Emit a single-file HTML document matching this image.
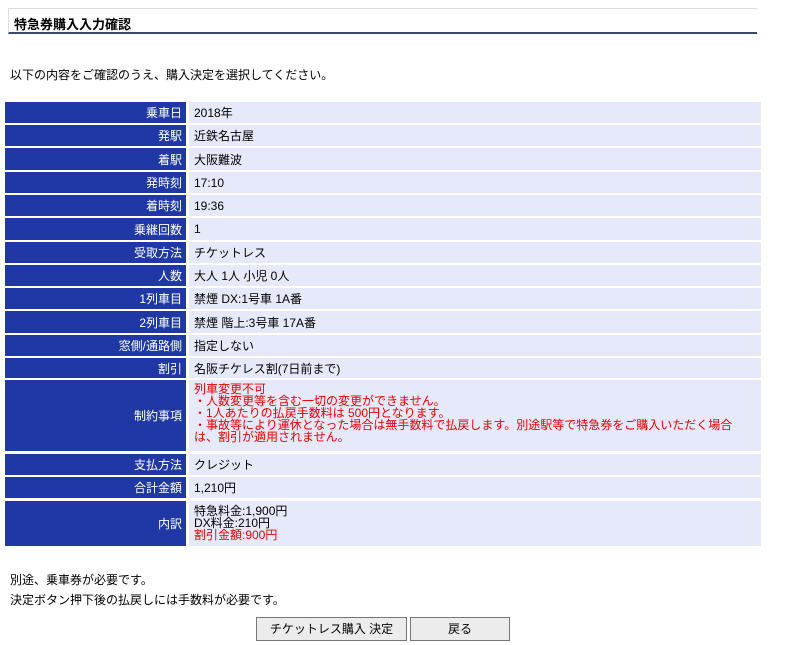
<!DOCTYPE html>
<html><head><meta charset="utf-8"><style>
body{margin:0;background:#fff;font-family:"Liberation Sans","Noto Sans CJK JP",sans-serif;font-size:12px;color:#000;width:789px;height:645px;overflow:hidden;position:relative}
.title{position:absolute;left:8px;top:8px;width:749px;height:26px;border-top:1px solid #ddd;border-left:1px solid #ddd;border-bottom:2px solid #3a4a6a;box-sizing:border-box;font-weight:bold;font-size:13px;padding:5px 0 0 5px}
.t{position:absolute;left:10px}
.r{position:absolute;left:5px;width:756px;display:flex}
.l{width:181px;background:#1f38a6;color:#fff;text-align:right;padding-right:4px;box-sizing:border-box;display:flex;align-items:center;justify-content:flex-end}
.v{margin-left:3px;flex:1;background:#e6e9fa;padding-left:5px;display:flex;align-items:center}
.red{color:#e00}
.btn{position:absolute;top:617px;height:24px;background:#ececec;border:1px solid #777;box-sizing:border-box;text-align:center;line-height:22px;font-size:12px}
</style></head><body>
<div class="title">特急券購入入力確認</div>
<div class="t" style="top:66px">以下の内容をご確認のうえ、購入決定を選択してください。</div>
<div class="r" style="top:102px;height:21px"><div class="l">乗車日</div><div class="v">2018年</div></div>
<div class="r" style="top:125px;height:21px"><div class="l">発駅</div><div class="v">近鉄名古屋</div></div>
<div class="r" style="top:148px;height:22px"><div class="l">着駅</div><div class="v">大阪難波</div></div>
<div class="r" style="top:172px;height:21px"><div class="l">発時刻</div><div class="v">17:10</div></div>
<div class="r" style="top:195px;height:21px"><div class="l">着時刻</div><div class="v">19:36</div></div>
<div class="r" style="top:218px;height:22px"><div class="l">乗継回数</div><div class="v">1</div></div>
<div class="r" style="top:242px;height:21px"><div class="l">受取方法</div><div class="v">チケットレス</div></div>
<div class="r" style="top:265px;height:21px"><div class="l">人数</div><div class="v">大人 1人 小児 0人</div></div>
<div class="r" style="top:288px;height:21px"><div class="l">1列車目</div><div class="v">禁煙 DX:1号車 1A番</div></div>
<div class="r" style="top:311px;height:22px"><div class="l">2列車目</div><div class="v">禁煙 階上:3号車 17A番</div></div>
<div class="r" style="top:335px;height:21px"><div class="l">窓側/通路側</div><div class="v">指定しない</div></div>
<div class="r" style="top:358px;height:20px"><div class="l">割引</div><div class="v">名阪チケレス割(7日前まで)</div></div>
<div class="r" style="top:380px;height:71px"><div class="l">制約事項</div><div class="v red" style="line-height:12px;display:block;padding-top:3px;white-space:nowrap">列車変更不可<br>・人数変更等を含む一切の変更ができません。<br>・1人あたりの払戻手数料は 500円となります。<br>・事故等により運休となった場合は無手数料で払戻します。別途駅等で特急券をご購入いただく場合<br>は、割引が適用されません。</div></div>
<div class="r" style="top:454px;height:21px"><div class="l">支払方法</div><div class="v">クレジット</div></div>
<div class="r" style="top:477px;height:21px"><div class="l">合計金額</div><div class="v">1,210円</div></div>
<div class="r" style="top:501px;height:45px"><div class="l">内訳</div><div class="v" style="display:block;line-height:12px;padding-top:4px">特急料金:1,900円<br>DX料金:210円<br><span class="red">割引金額:900円</span></div></div>
<div class="t" style="top:571px">別途、乗車券が必要です。</div>
<div class="t" style="top:591px">決定ボタン押下後の払戻しには手数料が必要です。</div>
<div class="btn" style="left:256px;width:151px">チケットレス購入 決定</div>
<div class="btn" style="left:410px;width:100px">戻る</div>
</body></html>
